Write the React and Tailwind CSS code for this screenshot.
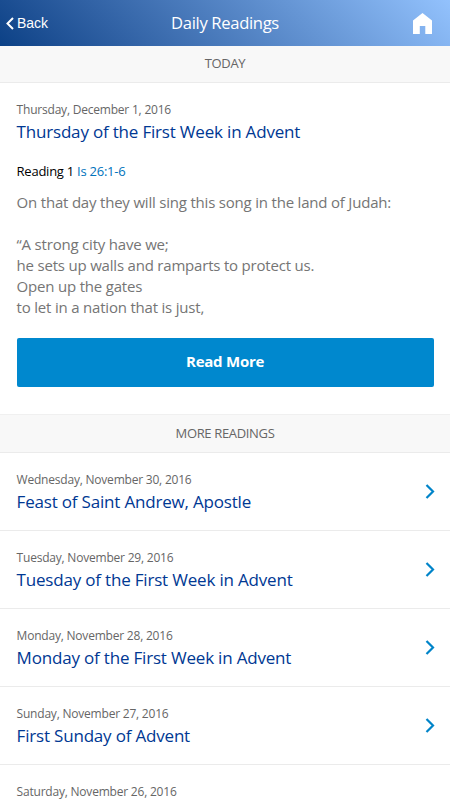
const readings = [
  { date: "Wednesday, November 30, 2016", title: "Feast of Saint Andrew, Apostle" },
  { date: "Tuesday, November 29, 2016", title: "Tuesday of the First Week in Advent" },
  { date: "Monday, November 28, 2016", title: "Monday of the First Week in Advent" },
  { date: "Sunday, November 27, 2016", title: "First Sunday of Advent" },
  { date: "Saturday, November 26, 2016" },
];

function Header() {
  return (
    <header className="grid h-[46px] grid-cols-3 items-center bg-linear-45 from-[#0b4186] to-[#93c2fd] text-white">
      <button className="flex items-center gap-[3px] pl-[6px] font-['Liberation_Sans',sans-serif] text-[14px]">
        <svg width="8" height="13" viewBox="0 0 8 13" fill="none" stroke="currentColor" strokeWidth="2">
          <path d="M7 1 1.5 6.5 7 12" />
        </svg>
        Back
      </button>
      <h1 className="pt-px text-center text-[16.6px] tracking-[-0.33px] whitespace-nowrap">Daily Readings</h1>
      <button className="justify-self-end pr-[18px]" aria-label="Home">
        <svg width="19" height="21" viewBox="0 0 19 21" fill="currentColor">
          <path d="M9.5 0 0 7.5V21h6.8v-8h5.5v8H19V7.5z" />
        </svg>
      </button>
    </header>
  );
}

function SectionTitle({ children }) {
  return (
    <h2 className="flex items-center justify-center border-b border-[#ebebeb] bg-[#f8f8f8] text-[13px] tracking-[-0.34px] text-[#666]">
      {children}
    </h2>
  );
}

function ReadingDate({ children }) {
  return <p className="text-[12px] leading-[18px] tracking-[-0.21px] text-[#666]">{children}</p>;
}

function ReadingTitle({ children }) {
  return <h3 className="text-[17px] leading-[26px] tracking-[-0.19px] text-[#003893]">{children}</h3>;
}

function ReadingRow({ date, title }) {
  return (
    <li className="h-[78.1px] border-b border-[#ebebeb] pt-[17.5px] pr-[15px] pl-[16.6px]">
      {title ? (
        <div className="flex items-center justify-between">
          <div>
            <ReadingDate>{date}</ReadingDate>
            <ReadingTitle>{title}</ReadingTitle>
          </div>
          <svg className="mb-[2px]" width="10" height="16" viewBox="0 0 10 16" fill="none" stroke="#0084c9" strokeWidth="2.2">
            <path d="m1.5 1 6.5 6.5L1.5 14" />
          </svg>
        </div>
      ) : (
        <ReadingDate>{date}</ReadingDate>
      )}
    </li>
  );
}

export default function App() {
  return (
    <div className="h-[800px] w-[450px] overflow-hidden bg-white font-['Open_Sans',sans-serif]">
      <Header />
      <div className="grid h-[37px]">
        <SectionTitle>TODAY</SectionTitle>
      </div>
      <main className="h-[331px] px-[16.6px] pt-[18px]">
        <ReadingDate>Thursday, December 1, 2016</ReadingDate>
        <ReadingTitle>Thursday of the First Week in Advent</ReadingTitle>
        <p className="mt-[16px] text-[13px] leading-[20px] tracking-[-0.25px] text-black">
          Reading 1 <a className="text-[#0073bc]">Is 26:1-6</a>
        </p>
        <p className="mt-[11px] text-[15px] leading-[20.9px] tracking-[-0.2px] text-[#757575]">
          On that day they will sing this song in the land of Judah:
          <br />
          <br />
          “A strong city have we;
          <br />
          he sets up walls and ramparts to protect us.
          <br />
          Open up the gates
          <br />
          to let in a nation that is just,
        </p>
        <button className="mt-[20.6px] h-[48.6px] w-[417px] rounded-[2px] bg-[#0088ce] pb-[3px] text-[15px] font-bold tracking-[-0.25px] text-white">
          Read More
        </button>
      </main>
      <div className="grid h-[39px] border-t border-[#f0f0f0]">
        <SectionTitle>MORE READINGS</SectionTitle>
      </div>
      <ul>
        {readings.map((reading) => (
          <ReadingRow key={reading.date} {...reading} />
        ))}
      </ul>
    </div>
  );
}
